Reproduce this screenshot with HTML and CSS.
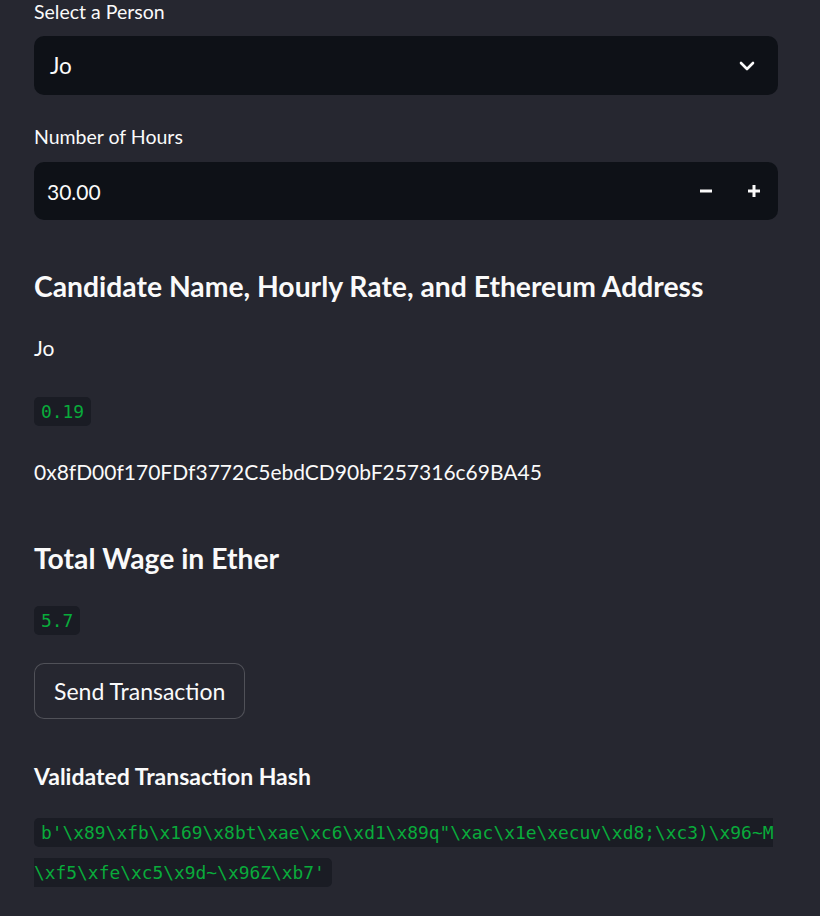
FILE: index.html
```html
<!DOCTYPE html>
<html lang="en">
<head>
<meta charset="utf-8">
<title>Payroll</title>
<link rel="stylesheet" href="styles.css">
</head>
<body>
<main class="app">
  <div class="label label-first">Select a Person</div>
  <div class="select">
    <span class="select-value">Jo</span>
    <svg class="chevron" width="16" height="10" viewBox="0 0 16 10"><path d="M2 2 L8 8 L14 2" fill="none" stroke="#fafafa" stroke-width="2.6" stroke-linecap="round" stroke-linejoin="round"/></svg>
  </div>

  <div class="label label-second">Number of Hours</div>
  <div class="number">
    <span class="number-value">30.00</span>
    <div class="steps">
      <span class="step"><svg width="12" height="12" viewBox="0 0 12 12"><rect x="0" y="4.5" width="12" height="3" fill="#fafafa"/></svg></span>
      <span class="step"><svg width="12" height="12" viewBox="0 0 12 12"><rect x="0" y="4.5" width="12" height="3" fill="#fafafa"/><rect x="4.5" y="0" width="3" height="12" fill="#fafafa"/></svg></span>
    </div>
  </div>

  <h3 class="heading heading-candidate">Candidate Name, Hourly Rate, and Ethereum Address</h3>
  <p class="text text-name">Jo</p>
  <p class="codeline codeline-rate"><code class="code">0.19</code></p>
  <p class="text text-address">0x8fD00f170FDf3772C5ebdCD90bF257316c69BA45</p>

  <h3 class="heading heading-wage">Total Wage in Ether</h3>
  <p class="codeline codeline-wage"><code class="code">5.7</code></p>

  <div class="btn-row"><button class="btn">Send Transaction</button></div>

  <h4 class="subheading">Validated Transaction Hash</h4>
  <p class="hash"><code class="hash-code">b'\x89\xfb\x169\x8bt\xae\xc6\xd1\x89q"\xac\x1e\xecuv\xd8;\xc3)\x96~M\xf5\xfe\xc5\x9d~\x96Z\xb7'</code></p>
</main>
</body>
</html>
```

FILE: styles.css
```css
html, body {
  margin: 0;
  padding: 0;
  background: #262730;
}

body {
  color: #fafafa;
  font-family: "Source Sans Pro", Lato, "Noto Sans", sans-serif;
  height: 916px;
  overflow: hidden;
}

.app {
  width: 744px;
  margin-left: 34px;
  display: flex;
  flex-direction: column;
}

.label {
  font-size: 19.5px;
  line-height: 24px;
  height: 24px;
}

.label-first { margin-top: 0; }
.label-second { margin-top: 30px; }

.select {
  margin-top: 12px;
  height: 59px;
  background: #0e1117;
  border-radius: 10px;
  display: flex;
  align-items: center;
  justify-content: space-between;
  padding: 0 23px 0 16px;
}

.select-value {
  font-size: 22.5px;
}

.chevron {
  display: block;
}

.number {
  margin-top: 13px;
  height: 58px;
  background: #0e1117;
  border-radius: 10px;
  display: flex;
  align-items: center;
  justify-content: space-between;
  padding-left: 13px;
}

.number-value {
  font-size: 21px;
}

.steps {
  display: flex;
  height: 100%;
}

.step {
  width: 48px;
  display: flex;
  align-items: center;
  justify-content: center;
}

.step svg { display: block; }

.heading {
  margin: 48px 0 0;
  font-size: 28.3px;
  line-height: 36px;
  font-weight: 700;
}

.heading-wage { margin-top: 54px; }

.text {
  margin: 30px 0 0;
  font-size: 21px;
  line-height: 28px;
}

.text-address { margin-top: 32px; }

.codeline {
  margin: 35px 0 0;
  line-height: 0;
}

.codeline-wage { margin-top: 30px; }

.code {
  display: inline-block;
  font-family: "DejaVu Sans Mono", monospace;
  font-size: 17.9px;
  line-height: 21px;
  padding: 4px 7px;
  background: #1a1c24;
  color: #09ab3b;
  border-radius: 5px;
}

.btn-row {
  margin-top: 28px;
  display: flex;
}

.btn {
  height: 56px;
  padding: 0 19px;
  background: #262730;
  color: #fafafa;
  border: 1px solid rgba(250, 250, 250, 0.2);
  border-radius: 10px;
  font-family: inherit;
  font-size: 23px;
}

.subheading {
  margin: 43px 0 0;
  font-size: 23px;
  line-height: 28px;
  font-weight: 700;
}

.hash {
  margin: 23px 0 0;
  font-family: "DejaVu Sans Mono", monospace;
  font-size: 17.9px;
  line-height: 40px;
  overflow-wrap: anywhere;
  word-break: break-all;
}

.hash-code {
  font-family: "DejaVu Sans Mono", monospace;
  font-size: 17.9px;
  padding: 4px 7px;
  background: #1a1c24;
  color: #09ab3b;
  border-radius: 5px;
}
```
